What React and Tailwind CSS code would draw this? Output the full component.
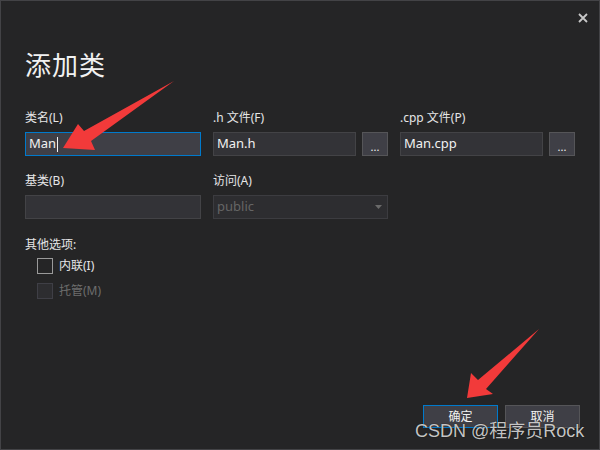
import React from "react";

const F = { fontFamily: '"Noto Sans", "Noto Sans CJK SC", sans-serif' };

function Label({ children, className = "" }) {
  return (
    <div className={"h-4 mb-[6px] text-[12px] leading-4 text-[#e6e6e6] " + className}>{children}</div>
  );
}

function Input({ value, focused, cursor }) {
  return (
    <div
      className={
        "h-6 flex-1 flex items-center px-[3px] text-[13px] text-[#f1f1f1] border " +
        (focused ? "border-[#007acc] bg-[#3f3f46]" : "border-[#434346] bg-[#333337]")
      }
    >
      {value}
      {cursor && <span className="ml-[1px] w-px h-[15px] bg-[#f1f1f1]" />}
    </div>
  );
}

function Browse() {
  return (
    <div className="h-6 w-[26px] ml-[6px] flex items-center justify-center border border-[#555558] bg-[#3f3f46] text-[11px] text-[#f1f1f1] leading-none pt-[4px]">
      ...
    </div>
  );
}

export default function App() {
  return (
    <div
      style={F}
      className="relative w-[600px] h-[450px] bg-[#252526] border border-[#434346] overflow-hidden select-none"
    >
      {/* close */}
      <svg className="absolute left-[577px] top-[12px]" width="10" height="10" viewBox="0 0 10 10">
        <path d="M1 1 L9 9 M9 1 L1 9" stroke="#c8c8c8" strokeWidth="1.8" />
      </svg>

      <div className="pl-[24px] pt-[46px]">
        <div className="text-[26px] leading-[36px] text-[#f1f1f1] tracking-[1px]">添加类</div>

        <div className="mt-[27px] grid grid-cols-[176px_175px_175px] gap-x-[12px]">
          <div>
            <Label>类名(L)</Label>
            <div className="flex"><Input value="Man" focused cursor /></div>
          </div>
          <div>
            <Label>.h 文件(F)</Label>
            <div className="flex"><Input value="Man.h" /><Browse /></div>
          </div>
          <div>
            <Label>.cpp 文件(P)</Label>
            <div className="flex"><Input value="Man.cpp" /><Browse /></div>
          </div>

          <div className="mt-[17px]">
            <Label>基类(B)</Label>
            <div className="flex"><Input value="" /></div>
          </div>
          <div className="mt-[17px]">
            <Label>访问(A)</Label>
            <div className="h-6 flex items-center justify-between px-[3px] border border-[#3c3c40] bg-[#2d2d30] text-[13px] text-[#656565]">
              <span>public</span>
              <svg width="7" height="4" viewBox="0 0 7 4" className="mr-[2px]">
                <path d="M0 0 L7 0 L3.5 4 Z" fill="#6a6a6a" />
              </svg>
            </div>
          </div>
          <div />
        </div>

        <div className="mt-[18px] text-[12px] leading-4 text-[#e6e6e6]">其他选项:</div>
        <div className="mt-[5px] pl-[12px] flex flex-col gap-[9px]">
          <div className="flex items-center h-4">
            <div className="w-4 h-4 border border-[#9a9a9a]" />
            <span className="ml-[6px] text-[12px] text-[#e6e6e6]">内联(I)</span>
          </div>
          <div className="flex items-center h-4">
            <div className="w-4 h-4 border border-[#3f3f46] bg-[#2d2d30]" />
            <span className="ml-[6px] text-[12px] text-[#6d6d6d]">托管(M)</span>
          </div>
        </div>

        <div className="mt-[106px] flex justify-end pr-[19px] gap-[7px]">
          <div className="w-[75px] h-[23px] flex items-center justify-center border border-[#007acc] bg-[#3f3f46] text-[12px] text-[#f1f1f1]">确定</div>
          <div className="w-[75px] h-[23px] flex items-center justify-center border border-[#555558] bg-[#3f3f46] text-[12px] text-[#f1f1f1]">取消</div>
        </div>
      </div>

      {/* red arrows */}
      <svg className="absolute left-0 top-0 pointer-events-none" width="600" height="450" viewBox="-1 -1 600 450">
        <polygon points="61,146 76,122 82,129 172,79 89,139 93,148" fill="#f23a3a" />
        <polygon points="465,396 469,371 476,378 537,327 484,387 491,392" fill="#f23a3a" />
      </svg>

      {/* watermark */}
      <div
        className="absolute left-[414px] top-[418px] text-[18px] leading-[24px] text-[#e8e8e8]/85 whitespace-nowrap"
        style={{ fontFamily: '"Liberation Sans", "Noto Sans CJK SC", sans-serif', textShadow: "0 0 1px #000" }}
      >
        CSDN @程序员Rock
      </div>
    </div>
  );
}
